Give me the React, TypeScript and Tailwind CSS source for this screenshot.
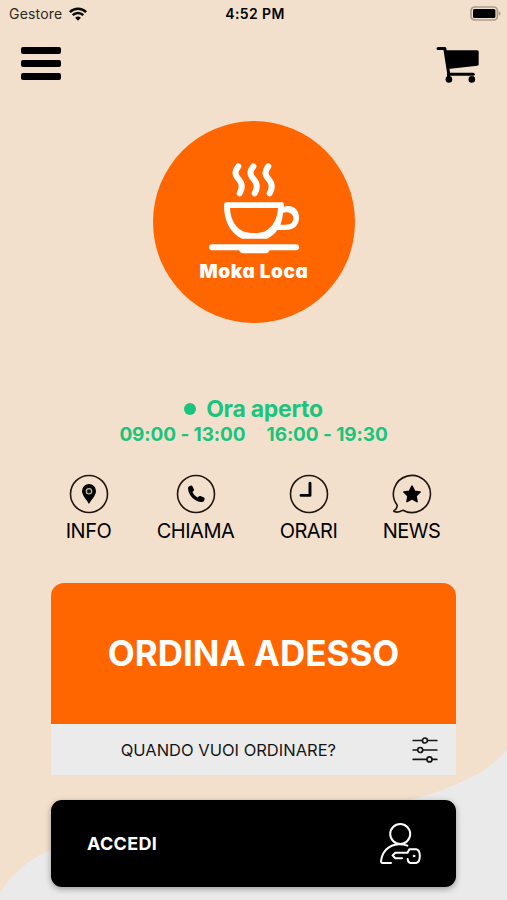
const shortcuts = [
  { label: 'INFO', width: 'w-[91px]', Icon: PinIcon },
  { label: 'CHIAMA', width: 'w-[123px]', Icon: PhoneIcon },
  { label: 'ORARI', width: 'w-[103px]', Icon: ClockIcon },
  { label: 'NEWS', width: 'w-[103px]', Icon: NewsIcon },
];

function WifiIcon() {
  return (
    <svg width="18" height="14" viewBox="0 0 18 14" fill="none" stroke="#0b0805" strokeWidth="2.5">
      <path d="M0.9 5.1A11.6 11.6 0 0 1 17.1 5.1" />
      <path d="M3.7 8.2A7.5 7.5 0 0 1 14.3 8.2" />
      <path d="M6.1 10.7A4.3 4.3 0 0 1 11.9 10.7L9 13.8Z" fill="#0b0805" stroke="none" />
    </svg>
  );
}

function BatteryIcon() {
  return (
    <svg width="31" height="15" viewBox="0 0 31 15">
      <rect x="1" y="1" width="26.4" height="13" rx="3.6" fill="none" stroke="#a99d8f" strokeWidth="1.7" />
      <rect x="3" y="3" width="22.4" height="9" rx="1.6" fill="#000" />
      <path d="M28.8 5.3Q30.6 6 30.6 7.5T28.8 9.7Z" fill="#a99d8f" />
    </svg>
  );
}

function CartIcon() {
  return (
    <svg width="44" height="38" viewBox="0 0 44 38" fill="none">
      <path d="M2 3.4H8.8L12.6 28V32" stroke="#000" strokeWidth="3" strokeLinecap="round" strokeLinejoin="round" />
      <path d="M12.6 29.3H37.2" stroke="#000" strokeWidth="3" strokeLinecap="round" />
      <path d="M9 5.2H41.2Q42.7 5.2 42.7 6.7V19.2Q42.7 20.6 41.3 20.8L12 24Z" fill="#000" />
      <circle cx="12.9" cy="34.4" r="3.3" fill="#000" />
      <circle cx="35.8" cy="34.4" r="3.3" fill="#000" />
    </svg>
  );
}

function CupIcon() {
  return (
    <svg width="202" height="133" viewBox="27 27 606 399" fill="none" stroke="#fff" strokeLinecap="round" strokeLinejoin="round">
      <g strokeWidth="18">
        <path d="M283 163C269 181 274 190 285 203C297 217 294 232 287 244" />
        <path d="M328 163C314 181 319 190 330 203C342 217 339 232 332 244" />
        <path d="M373 163C359 181 364 190 375 203C387 217 384 232 377 244" />
      </g>
      <path
        d="M246 271H414Q420 271 420 278L419 284C450 276 466 296 465 318C464 342 449 354 424 354H400C393 364 383 373 370 380H294C257 362 240 326 240 279Q240 271 246 271ZM258 288C259 323 276 352 306 361C321 364 345 364 360 359C386 347 400 322 402 288ZM417 302C416 314 414 326 409 338H425C440 338 448 331 448 318C448 304 433 297 417 302Z"
        fill="#fff"
        fillRule="evenodd"
        stroke="none"
      />
      <path d="M204 406H456" strokeWidth="18" />
      <path d="M283 408H379Q375 424 366 424H297Q287 424 283 408Z" fill="#fff" stroke="none" />
    </svg>
  );
}

function PinIcon() {
  return (
    <svg width="40" height="40" viewBox="0 0 40 40" fill="none">
      <circle cx="20" cy="20" r="18.5" stroke="#20150e" strokeWidth="1.6" />
      <path d="M20 30C17.8 25.6 13 21.5 13 16.9A7 7 0 0 1 27 16.9C27 21.5 22.2 25.6 20 30Z" fill="#000" />
      <circle cx="20" cy="17.3" r="2.7" fill="#1a120c" stroke="#c9b9a7" strokeWidth="1.2" />
    </svg>
  );
}

function PhoneIcon() {
  return (
    <svg width="40" height="40" viewBox="0 0 40 40" fill="none">
      <circle cx="20" cy="20" r="18.5" stroke="#20150e" strokeWidth="1.6" />
      <path
        d="M13.3 12.2L15 11.6Q16 11.4 16.4 12.3L18 15.4Q18.3 16.3 17.5 16.9L16.5 18C17.6 20.4 19.3 22.2 21.8 23.5L23 22.3Q23.7 21.8 24.5 22.1L27.9 23.6Q28.8 24.1 28.6 25L28.1 26.7Q27.4 28.2 25.5 28.1C18.8 27.8 12.4 21.4 12 14.5Q11.9 12.8 13.3 12.2Z"
        fill="#000"
      />
    </svg>
  );
}

function ClockIcon() {
  return (
    <svg width="40" height="40" viewBox="0 0 40 40" fill="none">
      <circle cx="20" cy="20" r="18.5" stroke="#20150e" strokeWidth="1.6" />
      <path d="M21 9.3V21.4H12" stroke="#000" strokeWidth="2.9" strokeLinecap="round" strokeLinejoin="round" />
    </svg>
  );
}

function NewsIcon() {
  return (
    <svg width="40" height="40" viewBox="0 0 40 40" fill="none" strokeLinejoin="round">
      <path d="M5.2 31.2A18.5 18.5 0 1 1 11 36.2C8.5 37.8 5 38.6 2.2 37.6C1.6 37.3 1.8 36.8 2.3 36.4C4.2 35.2 5.3 33.3 5.2 31.2Z" stroke="#20150e" strokeWidth="1.6" />
      <path d="M20 12.1L22.5 17.2L28.1 18L24 22L25 27.6L20 24.9L15 27.6L16 22L11.9 18L17.5 17.2Z" fill="#000" stroke="#000" strokeWidth="1.6" />
    </svg>
  );
}

function SlidersIcon() {
  return (
    <svg width="26" height="26" viewBox="0 0 26 26" stroke="#161616" strokeWidth="1.7" strokeLinecap="round" fill="#ebebeb">
      <path d="M1.2 3.5H24.8M1.2 13H24.8M1.2 22.4H24.8" />
      <circle cx="12.9" cy="3.5" r="2.5" />
      <circle cx="8.2" cy="13" r="2.5" />
      <circle cx="17.5" cy="22.4" r="2.5" />
    </svg>
  );
}

function UserKeyIcon() {
  return (
    <svg width="42" height="42" viewBox="0 0 42 42" fill="none" stroke="#fff" strokeWidth="2" strokeLinecap="round" strokeLinejoin="round">
      <circle cx="21.2" cy="11" r="10" />
      <path d="M12 40H3.6Q1.9 40 2.1 37.8C3 29.5 9 21.6 19.8 21.2Q24.8 21.1 28.4 22.7" />
      <path d="M23 35.3H16.4L13.5 32.4L16.4 29.8H28.5L30.4 26.3H37.2Q40.8 26.8 40.8 33.1T37.2 40H31.5Q28.9 39.8 28.7 36" />
      <circle cx="35" cy="33" r="0.9" fill="#fff" strokeWidth="1" />
    </svg>
  );
}

function Background() {
  return (
    <svg className="absolute inset-0" width="507" height="900" viewBox="0 0 507 900">
      <path
        d="M507 749C494 765 482 773 463 781C444 790 427 796 410 800C300 829 110 830 48 851C29 859 12 874 0 893V900H507Z"
        fill="#eaeaea"
      />
    </svg>
  );
}

export default function App() {
  return (
    <div className="relative h-[900px] w-[507px] overflow-hidden bg-[#f3e0cc] font-['Inter',sans-serif] text-black">
      <Background />
      <div className="relative flex h-full flex-col">
        <div className="grid h-[27px] grid-cols-[1fr_auto_1fr] items-center pr-1.5 pl-[9px] text-sm leading-none">
          <div className="flex items-center gap-[7px] text-[#30271f]">
            <span className="tracking-[0.2px]">Gestore</span>
            <WifiIcon />
          </div>
          <span className="font-semibold tracking-[0.4px]">4:52 PM</span>
          <div className="flex justify-end">
            <BatteryIcon />
          </div>
        </div>

        <header className="flex h-[94px] items-start justify-between pt-[18px] pr-[27px] pl-[21px]">
          <button aria-label="Menu" className="mt-0.5 flex flex-col gap-1.5">
            <span className="h-[7px] w-10 rounded-[2px] bg-black" />
            <span className="h-[7px] w-10 rounded-[2px] bg-black" />
            <span className="h-[7px] w-10 rounded-[2px] bg-black" />
          </button>
          <button aria-label="Carrello">
            <CartIcon />
          </button>
        </header>

        <div className="ml-[153px] flex size-[202px] flex-col items-center rounded-full bg-[#ff6600]">
          <CupIcon />
          <span className="mt-1.5 text-[19px] leading-6 font-black tracking-[0.6px] whitespace-nowrap text-white [font-feature-settings:'cv11']">
            Moka Loca
          </span>
        </div>

        <section className="mt-[72px] flex flex-col items-center font-bold text-[#1bc47d]">
          <div className="flex h-7 items-center gap-2.5">
            <span className="size-3 rounded-full bg-[#1bc47d]" />
            <span className="text-[23px] leading-7 tracking-[-0.25px]">Ora aperto</span>
          </div>
          <div className="flex gap-[21px] text-[19px] leading-6 tracking-[-0.1px]">
            <span>09:00 - 13:00</span>
            <span>16:00 - 19:30</span>
          </div>
        </section>

        <nav className="mt-[27px] flex pl-[43px]">
          {shortcuts.map(({ label, width, Icon }) => (
            <button key={label} className={`flex flex-col items-center ${width}`}>
              <Icon />
              <span className="mt-[5px] text-xl leading-6 tracking-[-0.5px]">{label}</span>
            </button>
          ))}
        </nav>

        <section className="mx-auto mt-10 w-[405px]">
          <button className="flex h-[141px] w-full items-center justify-center rounded-t-[13px] bg-[#ff6600] text-[35px] font-bold text-white">
            ORDINA ADESSO
          </button>
          <button className="flex h-[51px] w-full items-center justify-end bg-[#ebebeb] pr-[18px] text-[16.5px] text-[#161616]">
            <span className="mt-px mr-[76px]">QUANDO VUOI ORDINARE?</span>
            <SlidersIcon />
          </button>
        </section>

        <button className="mx-auto mt-[25px] flex h-[87px] w-[405px] items-center justify-between rounded-[11px] bg-black pr-[35px] pl-9 text-lg font-bold text-white shadow-[0_2px_6px_rgba(0,0,0,0.35)]">
          <span className="tracking-[0.3px]">ACCEDI</span>
          <UserKeyIcon />
        </button>
      </div>
    </div>
  );
}
